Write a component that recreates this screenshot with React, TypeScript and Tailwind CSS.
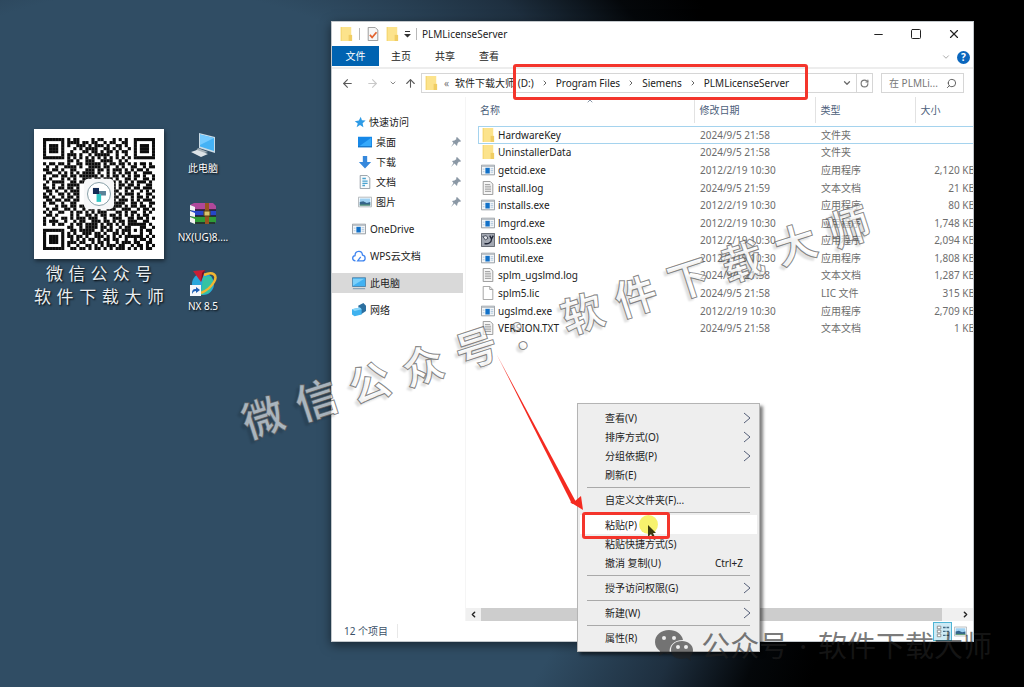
import type { ReactNode } from "react";
import {
    ArrowLeft,
    ArrowRight,
    ArrowUp,
    ChevronDown,
    ChevronLeft,
    ChevronRight,
    ChevronUp,
    Minus,
    RotateCw,
    Search,
    Square,
    X,
} from "lucide-react";

type IconName =
    | "folder"
    | "exe"
    | "text"
    | "blank"
    | "tools"
    | "star"
    | "desktop"
    | "download"
    | "document"
    | "picture"
    | "cloud"
    | "computer"
    | "network";

interface FileRow {
    name: string;
    icon: IconName;
    date: string;
    type: string;
    size?: string;
}

const files: FileRow[] = [
    { name: "HardwareKey", icon: "folder", date: "2024/9/5 21:58", type: "文件夹" },
    { name: "UninstallerData", icon: "folder", date: "2024/9/5 21:58", type: "文件夹" },
    { name: "getcid.exe", icon: "exe", date: "2012/2/19 10:30", type: "应用程序", size: "2,120 KB" },
    { name: "install.log", icon: "text", date: "2024/9/5 21:59", type: "文本文档", size: "21 KB" },
    { name: "installs.exe", icon: "exe", date: "2012/2/19 10:30", type: "应用程序", size: "80 KB" },
    { name: "lmgrd.exe", icon: "exe", date: "2012/2/19 10:30", type: "应用程序", size: "1,748 KB" },
    { name: "lmtools.exe", icon: "tools", date: "2012/2/19 10:30", type: "应用程序", size: "2,094 KB" },
    { name: "lmutil.exe", icon: "exe", date: "2012/2/19 10:30", type: "应用程序", size: "1,808 KB" },
    { name: "splm_ugslmd.log", icon: "text", date: "2024/9/5 21:58", type: "文本文档", size: "1,287 KB" },
    { name: "splm5.lic", icon: "blank", date: "2024/9/5 21:58", type: "LIC 文件", size: "315 KB" },
    { name: "ugslmd.exe", icon: "exe", date: "2012/2/19 10:30", type: "应用程序", size: "2,709 KB" },
    { name: "VERSION.TXT", icon: "text", date: "2024/9/5 21:58", type: "文本文档", size: "1 KB" },
];

const quickAccess: { label: string; icon: IconName }[] = [
    { label: "桌面", icon: "desktop" },
    { label: "下载", icon: "download" },
    { label: "文档", icon: "document" },
    { label: "图片", icon: "picture" },
];

const places: { label: string; icon: IconName; active?: boolean }[] = [
    { label: "OneDrive", icon: "exe" },
    { label: "WPS云文档", icon: "cloud" },
    { label: "此电脑", icon: "computer", active: true },
    { label: "网络", icon: "network" },
];

interface MenuEntry {
    label: string;
    submenu?: boolean;
    shortcut?: string;
    active?: boolean;
}

const menuGroups: MenuEntry[][] = [
    [
        { label: "查看(V)", submenu: true },
        { label: "排序方式(O)", submenu: true },
        { label: "分组依据(P)", submenu: true },
        { label: "刷新(E)" },
    ],
    [{ label: "自定义文件夹(F)..." }],
    [
        { label: "粘贴(P)", active: true },
        { label: "粘贴快捷方式(S)" },
        { label: "撤消 复制(U)", shortcut: "Ctrl+Z" },
    ],
    [{ label: "授予访问权限(G)", submenu: true }],
    [{ label: "新建(W)", submenu: true }],
    [{ label: "属性(R)" }],
];

const qrRows = [
    "#######.#.##....#.##...#.#.#..#######",
    "#.....#.####.##.##..#.##..##..#.....#",
    "#.###.#.#..###.#.###.#..##.#..#.###.#",
    "#.###.#...#.#.####..##.#.#..#.#.###.#",
    "#.###.#..#...##.##.#.##.#.##..#.###.#",
    "#.....#.###.#..#.#####..#..#..#.....#",
    "#######.#.#.#.#.#.#.#.#.#.#.#.#######",
    "........##.#..###..####..#.#.........",
    "#.##.##.#..##.#####.#.##.##.#.#.##.#.",
    ".#..#..####.#..####.##..#.#..##..#.##",
    "##.##.#..##...###.##.#.###.#.#.##.#..",
    ".##..#.#.#.#.####.#..#.#.#.##.#..###.",
    "#..##.##.##.######.#.#.##.#.#.##.#..#",
    "#.#...#.#.#..###.##.###.#..##.#..##.#",
    ".#.####..##.##........##.#.#.#.###.#.",
    "#..#..#.####...........#.##.##.#..##.",
    "##.#.##.##.#...........#.#.##.##.###.",
    ".##.#..#.###...........##..#.#..#.#.#",
    "#.#..##.#.##...........#.#.###.#..##.",
    "##.#..#.##.#...........##.#..#.##.#.#",
    ".##.##.##.##...........#.###.#.#.###.",
    "#.##..#..##............####..##.#..##",
    "#...#.##.##.##........####.#.##.##.#.",
    ".#.##..##.#..#.##.#..###..###..#.##.#",
    "#.#..##..#.##.#.#.###...##.#.##..#.#.",
    ".##.#....#.#..##.#.##.##.#.#.#.#.##..",
    "#..#..##.#.###.###..#..###..##.##.#.#",
    "#.###..#..#.##..###.##.#.##.###..##..",
    "#..#.##..#.##.####.#.##.#.#.######.#.",
    "........##..#.####.##.#..#.##...##..#",
    "#######..##.#####..#.##.#.###.#.#.##.",
    "#.....#.#.#..###.##.#..##.#.#...#..#.",
    "#.###.#.##.##.#..###.#.#.#.######.#.#",
    "#.###.#..#.#.#.##.#.##.##..#..#.##.#.",
    "#.###.#.###.##..#.##.#..#.###.##..##.",
    "#.....#.#..#..##.#.#.###.##..#.##.#.#",
    "#######..##.##.#.##.#.#.###.#.#.#.##.",
];

const Svg = ({ size = 14, children }: { size?: number; children: ReactNode }) => (
    <svg width={size} height={size} viewBox="0 0 16 16" className="shrink-0" aria-hidden="true">
        {children}
    </svg>
);

const Icon = ({ name, size }: { name: IconName; size?: number }) => {
    switch (name) {
        case "folder":
            return (
                <Svg size={size}>
                    <path d="M2 0h12v16H2z" fill="#fce38c" />
                    <path d="M11 9h4v7h-4z" fill="#f0cd63" />
                    <path d="M2 0h1v16H2z" fill="#f3d26b" />
                </Svg>
            );
        case "exe":
            return (
                <Svg size={size}>
                    <path d="M.5 2.5h15v11H.5z" fill="#f4f6f8" stroke="#8b9299" />
                    <path d="M1 3h14v1.500H1z" fill="#b9c0c6" />
                    <path d="M5 5.500h5v6.500H5z" fill="#1271c8" />
                    <path d="M11 6.500h3M11 8.500h3M11 10.500h3M2 7h2M2 10h2" stroke="#a8c4dc" />
                </Svg>
            );
        case "text":
            return (
                <Svg size={size}>
                    <path d="M2.500 .5h8l3 3v12h-11z" fill="#f6f6f6" stroke="#8f8f8f" />
                    <path d="M4.500 4h6M4.500 6h7M4.500 8h7M4.500 10h7M4.500 12h7" stroke="#9a9a9a" />
                </Svg>
            );
        case "blank":
            return (
                <Svg size={size}>
                    <path d="M2.500 .5h7.500l3.500 3.500v11.500h-11z" fill="#fff" stroke="#999" />
                    <path d="M10 .5v3.500h3.500" fill="none" stroke="#999" />
                </Svg>
            );
        case "tools":
            return (
                <Svg size={size}>
                    <path d="M.5 .5h15v15H.5z" fill="#a3a8b2" stroke="#555a63" />
                    <path d="M2 4l4-1 2 3-3 2z" fill="#e4e7ec" stroke="#39404f" />
                    <path d="M10 3l2 4 2-4M12 7c0 4-4 6-8 5" fill="none" stroke="#1f2536" strokeWidth="1.500" />
                </Svg>
            );
        case "star":
            return (
                <Svg size={size}>
                    <path d="M9 1l1.500 4.500 5 .5-4 3.500 1 5.500-4.500-3L3.500 15l1.500-5L1 7l5.500-1z" fill="#2e9be6" />
                </Svg>
            );
        case "desktop":
            return (
                <Svg size={size}>
                    <path d="M0 2h16v12H0z" fill="#1688e8" />
                    <path d="M1 13L15 3v10z" fill="#35a9fb" />
                    <path d="M0 13h16v1H0z" fill="#1268b5" />
                </Svg>
            );
        case "download":
            return (
                <Svg size={size}>
                    <path d="M5.500 1h5v7H15l-7 7.500L1 8h4.500z" fill="#3688dc" />
                </Svg>
            );
        case "document":
            return (
                <Svg size={size}>
                    <path d="M2.500 .5h8l3 3v12h-11z" fill="#f7fafc" stroke="#8b969e" />
                    <path d="M5 4h4M5 7h6M5 9.500h6M5 12h3" stroke="#4aa3cf" strokeWidth="1.500" />
                </Svg>
            );
        case "picture":
            return (
                <Svg size={size}>
                    <path d="M.5 2.500h15v11H.5z" fill="#fff" stroke="#a9b0b5" />
                    <path d="M2 4h12v8H2z" fill="#9ed1f2" />
                    <path d="M2 8l4-1 4 2 4-1v4H2z" fill="#35648a" />
                    <path d="M2 11h12v1H2z" fill="#6aa86c" />
                </Svg>
            );
        case "cloud":
            return (
                <Svg size={size}>
                    <path
                        d="M4 13.500C-.5 13 0 8 3.500 7.500 3.500 1.500 11.500 1 12 7c4 .5 4 6.500 0 6.500H6.500L10 9"
                        fill="none"
                        stroke="#4186f0"
                        strokeWidth="1.500"
                    />
                </Svg>
            );
        case "computer":
            return (
                <Svg size={size}>
                    <path d="M.5 2h15v10H.5z" fill="#41b1f2" stroke="#4c7fa5" />
                    <path d="M1 11L14 3H1z" fill="#7cd0fa" />
                    <path d="M1 14.500h14" stroke="#6d8fa8" />
                </Svg>
            );
        case "network":
            return (
                <Svg size={size}>
                    <path d="M7 3l6-3 3 3v6l-6 4z" fill="#2d6f9f" />
                    <path d="M0 7l9-2 2 2v6l-8 2-3-2z" fill="#3fb2ef" />
                    <path d="M0 7l9-2 2 2-8 2z" fill="#8ad7fb" />
                </Svg>
            );
    }
};

const QrCode = () => (
    <div className="bg-white p-[9px] shadow-[1px_2px_4px_rgba(0,0,0,0.5)]">
        <svg viewBox="0 0 37 37" className="block w-full" role="img" aria-label="微信公众号二维码">
            {qrRows.map((row, y) =>
                row
                    .split("")
                    .map((cell, x) =>
                        cell === "#" ? <rect key={`${x}-${y}`} x={x} y={y} width="1.03" height="1.03" fill="#0c0c0c" /> : null,
                    ),
            )}
            <rect x="13.500" y="13.500" width="10" height="10" rx="1.500" fill="#f6f7f8" />
            <circle cx="18.500" cy="18.500" r="3.800" fill="#fff" stroke="#7d97a0" strokeWidth=".3" />
            <path d="M16.500 16.500h2v2h-2z" fill="#152c55" />
            <path d="M18.500 17.500h2.300v1.500h-2.300z" fill="#5b8298" />
            <path d="M17.700 18.500h1.500v2.600h-1.500z" fill="#2fc6c4" />
        </svg>
    </div>
);

const DesktopShortcut = ({ label, children }: { label: string; children: ReactNode }) => (
    <button className="flex w-full flex-col items-center gap-px whitespace-nowrap text-[10px] leading-[16px] text-white [text-shadow:1px_1px_2px_#000]">
        <svg width="30" height="28" viewBox="0 0 30 28" aria-hidden="true">
            {children}
        </svg>
        {label}
    </button>
);

const Desktop = () => (
    <aside className="flex w-[331px] shrink-0 items-start pl-[34px] pt-[129px]">
        <div className="w-[130px]">
            <QrCode />
            <div className="mt-[3px] flex flex-col text-[17px] leading-[23px] text-[#e8edf0] [text-shadow:1px_1px_2px_#000]">
                <div className="flex justify-between px-[12px]">
                    {"微信公众号".split("").map((c) => (
                        <span key={c}>{c}</span>
                    ))}
                </div>
                <div className="flex justify-between">
                    {"软件下载大师".split("").map((c) => (
                        <span key={c}>{c}</span>
                    ))}
                </div>
            </div>
        </div>
        <div className="ml-[12px] flex w-[54px] flex-col gap-[24px] pt-[2px]">
            <DesktopShortcut label="此电脑">
                <path d="M11 2l16 4v16l-16-5z" fill="#c9dbe6" />
                <path d="M12 3.500l14 3.500v13l-14-4.500z" fill="#45b2f5" />
                <path d="M12 3.500l14 3.500-14 7z" fill="#74caff" />
                <path d="M10 17l10 4-7 2-6-2z" fill="#a6b1b8" />
                <path d="M3 21l6-2 11 4-7 3z" fill="#dde3e7" />
            </DesktopShortcut>
            <DesktopShortcut label="NX(UG)8....">
                <path d="M2 5l4-2h19l3 3v5H6z" fill="#b0489a" />
                <path d="M2 11l4-1h22v6H6z" fill="#2646c9" />
                <path d="M2 17l4-1h22v6l-2 2H6z" fill="#2f9b37" />
                <path d="M2 5l5 2v4l-5-1zM2 11l5 2v4l-5-1zM2 17l5 2v5l-5-2z" fill="#f2f2f2" />
                <path d="M7 10h21M7 16h21M7 23h20" stroke="#241a2b" strokeWidth="1.500" />
                <path d="M17 3h4v21h-4z" fill="#9a5420" />
                <path d="M16 11h6v5h-6z" fill="#d9c46d" stroke="#5d4312" />
            </DesktopShortcut>
            <DesktopShortcut label="NX 8.5">
                <circle cx="15" cy="15" r="11" fill="#28a7dc" />
                <path d="M15 8l8-1 3 8-5 9-8 2z" fill="#36c3a2" />
                <path d="M16 6c9-4 14 0 10 7-3 5-8 9-13 11" fill="none" stroke="#f2b632" strokeWidth="2.500" />
                <path d="M5 2l12-1-4 12z" fill="#c81f35" />
                <path d="M17 1l-4 12 1-9z" fill="#78101f" />
                <path d="M2 16h11v11H2z" fill="#f4f7fa" />
                <path d="M4 25c0-4 1-5 4-5v-2l4 3-4 3v-2c-2 0-3 1-4 3z" fill="#1d5fb5" />
            </DesktopShortcut>
        </div>
    </aside>
);

const TitleBar = () => (
    <header className="flex h-[24px] items-center pl-[7px]">
        <Icon name="folder" />
        <span className="mx-[6px] h-[12px] w-px bg-[#b8b8b8]" />
        <Svg>
            <path d="M2.500 .5h8l3 3v12h-11z" fill="#f7f7f7" stroke="#8f8f8f" />
            <path d="M4.500 9l2.500 3 5-6" fill="none" stroke="#e2622e" strokeWidth="2" />
        </Svg>
        <span className="ml-[5px]">
            <Icon name="folder" />
        </span>
        <svg width="7" height="8" viewBox="0 0 7 8" className="ml-[5px]" aria-hidden="true">
            <path d="M1 1h5v1H1zM0 4h7L3.500 7.500z" fill="#333" />
        </svg>
        <span className="mx-[5px] h-[12px] w-px bg-[#b8b8b8]" />
        <h1 className="flex-1">PLMLicenseServer</h1>
        <button aria-label="最小化" className="flex w-[38px] justify-center">
            <Minus size={13} strokeWidth={2} />
        </button>
        <button aria-label="最大化" className="flex w-[38px] justify-center">
            <Square size={12} strokeWidth={2} />
        </button>
        <button aria-label="关闭" className="flex w-[38px] justify-center">
            <X size={14} strokeWidth={2} />
        </button>
    </header>
);

const Ribbon = () => (
    <nav className="flex h-[23px] items-start border-b-2 border-[#ededed]">
        <button className="h-[20px] w-[47px] bg-[#0063b1] text-white">文件</button>
        {["主页", "共享", "查看"].map((tab) => (
            <button key={tab} className="h-[20px] w-[44px]">
                {tab}
            </button>
        ))}
        <div className="ml-auto flex h-[22px] items-center gap-[6px] pr-[3px]">
            <ChevronDown size={10} className="text-[#9a9a9a]" />
            <button aria-label="帮助" className="h-[13px] w-[13px] rounded-full bg-[#0a66bd] text-[10px] font-bold leading-[13px] text-white">
                ?
            </button>
        </div>
    </nav>
);

const AddressBar = () => (
    <div className="flex h-[28px] items-center px-[9px]">
        <div className="flex w-[80px] shrink-0 items-center text-[#5a5a5a]">
            <ArrowLeft size={13} />
            <ArrowRight size={13} className="ml-[12px] text-[#c8c8c8]" />
            <ChevronDown size={8} strokeWidth={3} className="ml-[10px] text-[#8a8a8a]" />
            <ArrowUp size={13} className="ml-[7px]" />
        </div>
        <div className="flex h-[20px] min-w-0 flex-1 items-center border border-[#d6d6d6] pl-[2px]">
            <Icon name="folder" />
            <span className="mx-[6px] text-[#777]">«</span>
            <span className="whitespace-nowrap">软件下载大师 (D:)</span>
            {["Program Files", "Siemens", "PLMLicenseServer"].map((part) => (
                <span key={part} className="flex items-center whitespace-nowrap">
                    <ChevronRight size={8} strokeWidth={3} className="mx-[7px] text-[#666]" />
                    {part}
                </span>
            ))}
            <ChevronDown size={10} strokeWidth={3} className="ml-auto mr-[4px] shrink-0 text-[#6b6b6b]" />
            <button aria-label="刷新" className="flex h-full w-[16px] items-center justify-center border-l border-[#d6d6d6]">
                <RotateCw size={9} strokeWidth={3} className="text-[#777]" />
            </button>
        </div>
        <label className="ml-[8px] flex h-[20px] w-[83px] items-center border border-[#d6d6d6] pl-[7px] pr-[6px]">
            <input aria-label="搜索" placeholder="在 PLMLi..." className="w-full min-w-0 outline-none placeholder:text-[#777]" />
            <Search size={11} className="shrink-0 -scale-x-100 text-[#555]" />
        </label>
    </div>
);

const Sidebar = () => (
    <nav className="flex w-[131px] shrink-0 flex-col gap-[7px] pt-[15px]">
        <ul>
            <li className="flex h-[20px] items-center gap-[3px] pl-[22px]">
                <Icon name="star" size={12} />
                快速访问
            </li>
            {quickAccess.map((item) => (
                <li key={item.label} className="flex h-[20px] items-center gap-[4px] pl-[26px] pr-[2px]">
                    <Icon name={item.icon} />
                    <span className="flex-1">{item.label}</span>
                    <svg width="10" height="10" viewBox="0 0 10 10" aria-hidden="true">
                        <path d="M6 0l4 4-1 1-1-.5L6.500 6.500 6 9 3.500 6.500 0 10l2.500-4L1 4l2.500-.5L5.500 2 5 1z" fill="#8b98a5" />
                    </svg>
                </li>
            ))}
        </ul>
        {places.map((place) => (
            <a
                key={place.label}
                href="#"
                className={`flex h-[20px] items-center gap-[4px] pl-[20px] ${place.active ? "bg-[#d9d9d9]" : ""}`}
            >
                <Icon name={place.icon} />
                {place.label}
            </a>
        ))}
    </nav>
);

const Columns = () => (
    <colgroup>
        <col />
        <col className="w-[121px]" />
        <col className="w-[100px]" />
        <col className="w-[62px]" />
    </colgroup>
);

const FileList = () => (
    <div className="min-w-0 flex-1 overflow-hidden pl-[12px]">
        <table className="w-[calc(100%+4px)] table-fixed border-collapse whitespace-nowrap text-left">
            <Columns />
            <thead className="text-[#4c607a]">
                <tr className="h-[26px]">
                    <th className="relative pl-[2px] font-normal">
                        名称
                        <ChevronUp size={8} className="absolute left-1/2 top-0" />
                    </th>
                    <th className="border-l border-[#e2e2e2] pl-[5px] font-normal">修改日期</th>
                    <th className="border-l border-[#e2e2e2] pl-[5px] font-normal">类型</th>
                    <th className="border-l border-[#e2e2e2] pl-[5px] font-normal">大小</th>
                </tr>
            </thead>
        </table>
        <table className="mt-[3px] h-[211px] w-[calc(100%+4px)] table-fixed border-collapse whitespace-nowrap text-left">
            <Columns />
            <tbody>
                {files.map((file, i) => (
                    <tr key={file.name} className={i === 0 ? "outline outline-1 -outline-offset-1 outline-[#a5d3ee]" : ""}>
                        <td className="py-0 pl-[3px]">
                            <span className="flex items-center gap-[3px]">
                                <Icon name={file.icon} />
                                {file.name}
                            </span>
                        </td>
                        <td className="py-0 pl-[6px] text-[#6d6d6d]">{file.date}</td>
                        <td className="py-0 pl-[6px] text-[#6d6d6d]">{file.type}</td>
                        <td className="py-0 pr-[2px] text-right text-[#6d6d6d]">{file.size}</td>
                    </tr>
                ))}
            </tbody>
        </table>
    </div>
);

const ScrollBar = () => (
    <div className="flex h-[13px] shrink-0 bg-[#f0f0f0]">
        <button aria-label="向左滚动" className="flex w-[15px] items-center justify-center">
            <ChevronLeft size={9} strokeWidth={4} />
        </button>
        <div className="mr-[16px] flex-1 bg-[#cdcdcd]" />
        <button aria-label="向右滚动" className="flex w-[15px] items-center justify-center">
            <ChevronRight size={9} strokeWidth={4} />
        </button>
    </div>
);

const StatusBar = () => (
    <footer className="flex h-[20px] shrink-0 items-center pl-[12px] pr-[6px] text-[#3b5168]">
        <span className="border-r border-[#e8e8e8] pr-[9px]">12 个项目</span>
        <button aria-label="详细信息" className="ml-auto flex h-[19px] w-[19px] items-center justify-center border border-[#4fb5d5] bg-[#cdeaf5]">
            <Svg>
                <path d="M1.500 2.500h4v3h-4zM1.500 7h4v3h-4zM1.500 11.500h4v3h-4z" fill="#fff" stroke="#888" />
                <path d="M8 4h3M12 4h3M8 8.500h3M12 8.500h3M8 13h3M12 13h3" stroke="#456b85" strokeWidth="1.500" />
            </Svg>
        </button>
        <button aria-label="大图标" className="ml-[2px]">
            <Icon name="picture" size={13} />
        </button>
    </footer>
);

const ContextMenu = () => (
    <div role="menu" className="absolute left-[245px] top-[381px] w-[183px] border border-[#b4b4b4] bg-[#eeeeee] px-[2px] py-[4px] shadow-[3px_3px_3px_rgba(0,0,0,0.5)]">
        {menuGroups.map((group, i) => (
            <div key={i}>
                {i > 0 && (
                    <div className="flex h-[6px] items-center px-[7px]">
                        <hr className="w-full border-[#a9a9a9]" />
                    </div>
                )}
                {group.map((entry) => (
                    <button
                        key={entry.label}
                        role="menuitem"
                        className={`flex h-[19px] w-full items-center pl-[25px] pr-[6px] ${entry.active ? "bg-white" : ""}`}
                    >
                        <span className="flex-1 text-left">{entry.label}</span>
                        {entry.shortcut && <span className="pr-[8px]">{entry.shortcut}</span>}
                        {entry.submenu && (
                            <svg width="8" height="12" viewBox="0 0 8 12" aria-hidden="true">
                                <path d="M1 1l6 5-6 5" fill="none" stroke="#555f78" />
                            </svg>
                        )}
                    </button>
                ))}
            </div>
        ))}
    </div>
);

const Annotations = () => (
    <>
        <div className="absolute left-[181px] top-[42px] h-[36px] w-[295px] rounded-[3px] border-[3px] border-[#f4352c]" />
        <svg width="90" height="160" viewBox="0 0 90 160" className="absolute left-[164px] top-[332px]" aria-hidden="true">
            <path d="M1 1l79 147-4 2z" fill="#f42a20" />
            <path d="M87 156l-13-8 5-1 6-5z" fill="#f42a20" />
        </svg>
        <div className="absolute left-[307px] top-[493px] h-[19px] w-[19px] rounded-full bg-[#f4ee3c]/75" />
        <svg width="10" height="16" viewBox="0 0 10 16" className="absolute left-[316px] top-[503px]" aria-hidden="true">
            <path d="M0 0l8 8H5l3 6-2 1-3-6-3 3z" fill="#3a3a10" />
        </svg>
        <div className="absolute left-[250px] top-[490px] h-[27px] w-[88px] rounded-[3px] border-[3px] border-[#f4352c]" />
    </>
);

const Explorer = () => (
    <section className="relative flex min-w-0 flex-1 flex-col border border-[#c3c8cc] bg-white shadow-[0_3px_10px_rgba(0,0,0,0.5)]">
        <TitleBar />
        <Ribbon />
        <AddressBar />
        <div className="flex flex-1">
            <Sidebar />
            <div className="ml-[2px] flex min-w-0 flex-1 flex-col border-l border-[#f5f5f5]">
                <div className="flex flex-1">
                    <FileList />
                </div>
                <ScrollBar />
            </div>
        </div>
        <StatusBar />
        <ContextMenu />
        <Annotations />
    </section>
);

const Watermarks = () => (
    <>
        <div className="pointer-events-none absolute left-[220px] top-[294px] flex rotate-[-18deg] text-[42px] font-bold leading-[56px] text-white/60 [-webkit-text-stroke:1px_rgba(70,70,70,0.65)] [text-shadow:-4px_2px_2px_rgba(0,0,0,0.12)]">
            {"微信公众号：软件下载大师".split("").map((c) => (
                <span key={c} className="w-[56px] text-center">
                    {c}
                </span>
            ))}
        </div>
        <div className="pointer-events-none absolute bottom-[21px] right-[32px] flex items-center text-[29px] leading-[40px] text-[#222]/60">
            <svg width="39" height="32" viewBox="0 0 39 32" className="mr-[7px]" aria-hidden="true">
                <path
                    fillRule="evenodd"
                    d="M14 0C6 0 0 5 0 12c0 4 2 7 5 9l-1 5 5-3c2 1 4 1 6 1-2-8 4-14 13-14C27 4 21 0 14 0zM9 6a2 2 0 110 4 2 2 0 010-4zM19 6a2 2 0 110 4 2 2 0 010-4z"
                    fill="currentColor"
                />
                <path
                    fillRule="evenodd"
                    d="M27 11c-7 0-11 4-11 9s4 9 11 9l5-1 4 3-1-4c2-2 3-4 3-7 0-5-5-9-11-9zM23 15a2 2 0 110 4 2 2 0 010-4zM31 15a2 2 0 110 4 2 2 0 010-4z"
                    fill="currentColor"
                />
            </svg>
            <span>公众号</span>
            <span className="mx-[11px]">·</span>
            <span>软件下载大师</span>
        </div>
    </>
);

export default function App() {
    return (
        <main className="relative flex min-h-screen overflow-hidden bg-[radial-gradient(circle_at_15%_64%,#304d64_0,#304d64_450px,#1e2f3f_560px,#04070a_640px,#000_700px)] font-['Noto_Sans','Noto_Sans_CJK_SC',sans-serif] text-[10px] leading-[14px] text-[#222]">
            <Desktop />
            <div className="flex min-w-0 flex-1 pb-[45px] pr-[50px] pt-[21px]">
                <Explorer />
            </div>
            <Watermarks />
        </main>
    );
}
